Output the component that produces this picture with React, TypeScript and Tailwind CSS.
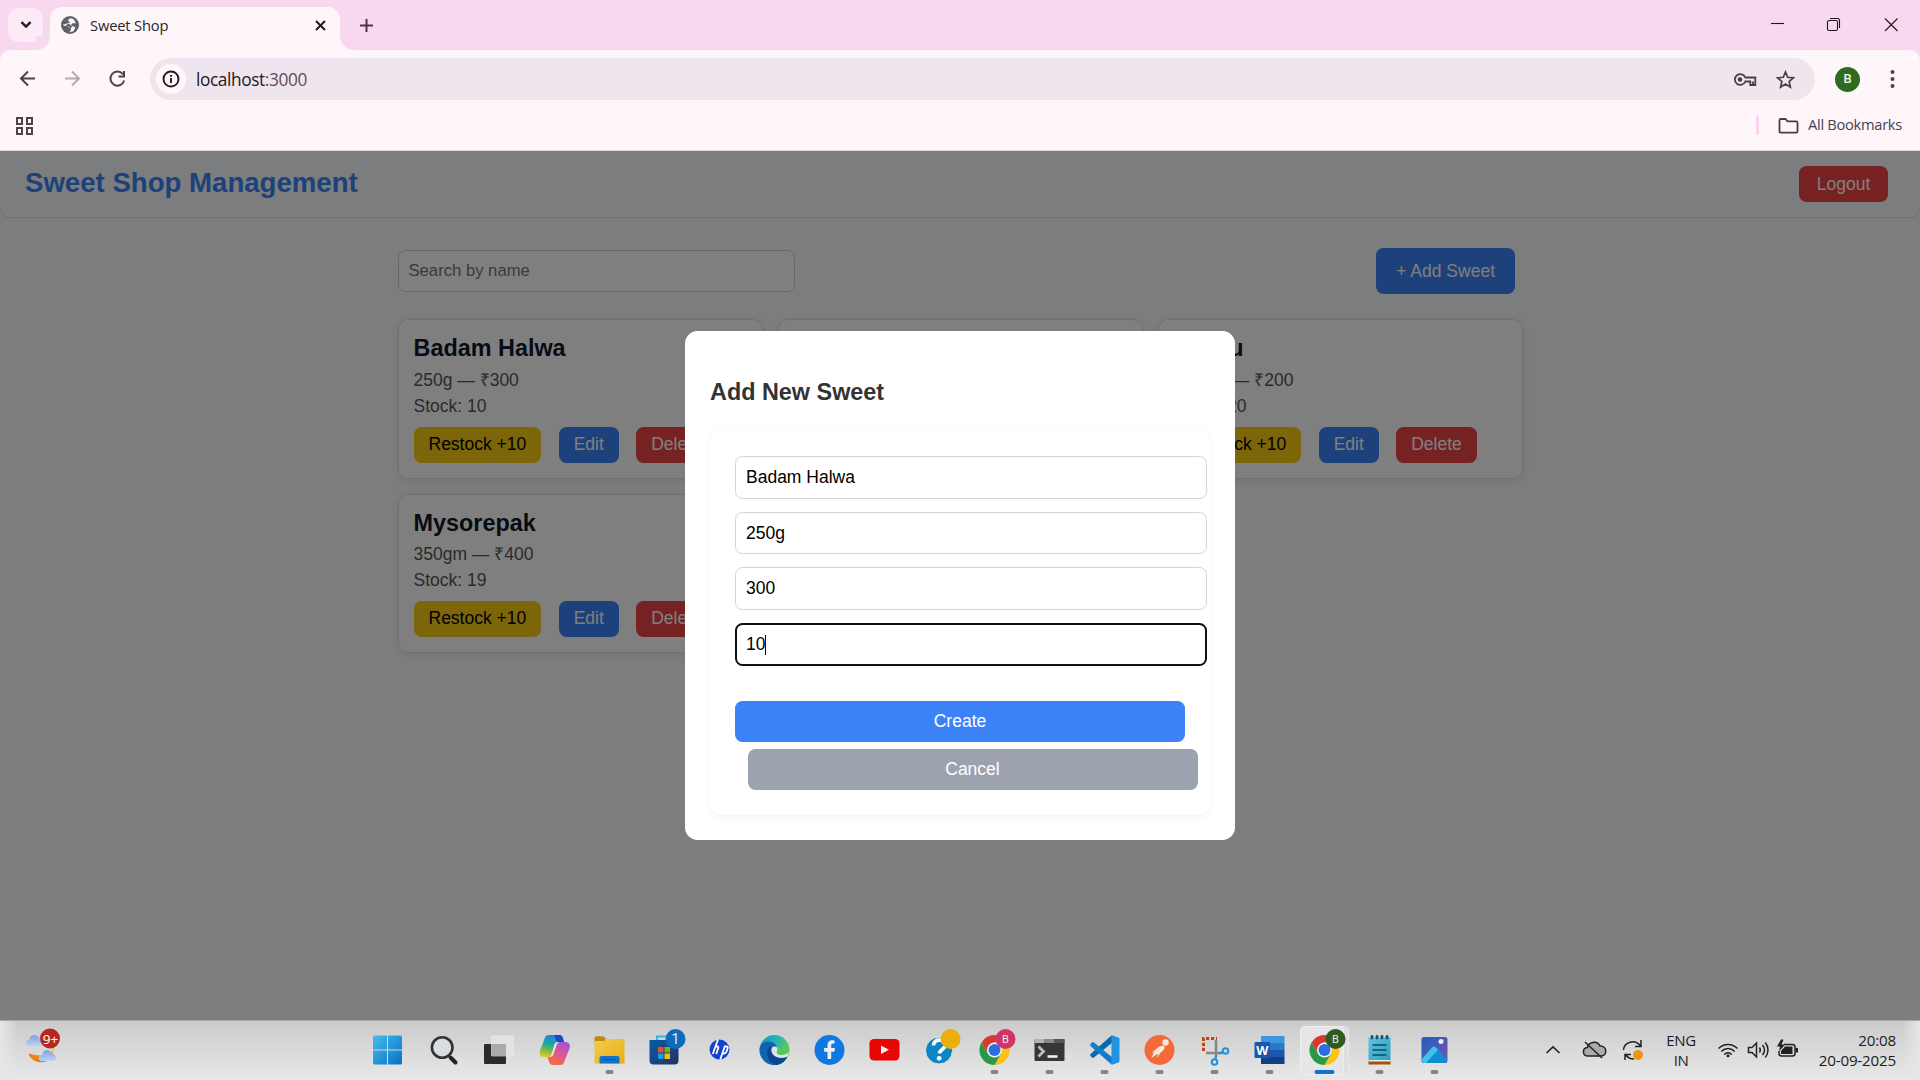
import React from "react";

const ui = "font-['Open_Sans','Noto_Sans',sans-serif]";

function TabStrip() {
  return (
    <div className="flex h-[50px] shrink-0 bg-[#f7d8ee]">
      <div className="mt-2 ml-2 flex h-[34px] w-[35px] items-center justify-center rounded-[11px] bg-[#fdeaf7]">
        <svg width="12" height="8" viewBox="0 0 12 8" fill="none" stroke="#1f1a1e" strokeWidth="2.4">
          <path d="M1.5 1.2 6 5.6l4.5-4.4" />
        </svg>
      </div>
      <div className="relative mt-[7px] ml-[7px] flex h-[43px] w-[290px] items-center rounded-t-[12px] bg-[#fff6fa] pb-[7px]">
        <span className="absolute bottom-0 -left-[14px] size-[14px] bg-[radial-gradient(circle_at_0_0,#f7d8ee_13.5px,#fff6fa_14.5px)]" />
        <span className="absolute -right-[14px] bottom-0 size-[14px] bg-[radial-gradient(circle_at_100%_0,#f7d8ee_13.5px,#fff6fa_14.5px)]" />
        <svg className="ml-[11px]" width="18" height="18" viewBox="0 0 18 18">
          <circle cx="9" cy="9" r="9" fill="#5f6368" />
          <path d="M11 2.600C8.600 2.300 7.300 3 7.200 4.300c-.1 1.200 1.500.9 1.500 2 0 1.300-1.400.9-2.700 1.300-1.200.400-2 1.100-3.900.700.300 1.300 1.300 1.700 2.600 1.600 1.500-.1 3.200.1 3.600 1.400.300 1.200 1.700.8 1.700 2 0 1-.7 1.300-1.600 2.500 1.500.200 3-.2 4.200-.9.300-1.700 1.500-1.700 1.500-3.200-.1-1.300-1.300-1.300-2.500-1.500-1.400-.3-1.600-1.700-.8-2.500.9-.8 2.500-.4 3.800-.3C14.400 5.400 13 3.500 11 2.600z" fill="#fff6fa" />
          <path d="M7.500 7.400c1 1.500 2.800 1 3.200 2.600.300 1.400-.4 2.400-1.500 2.500-.5-2-1.700-3-4.400-2.800.5-1.200 1.700-1.600 2.700-2.300z" fill="#5f6368" />
        </svg>
        <span className={"ml-[11px] w-[90px] text-[14.7px] tracking-[-0.15px] whitespace-nowrap text-[#2a2328] " + ui}>Sweet Shop</span>
        <svg className="ml-auto mr-[14.500px]" width="11" height="11" viewBox="0 0 11 11" stroke="#1f1a1e" strokeWidth="2">
          <path d="m1 1 9 9M10 1l-9 9" />
        </svg>
      </div>
      <svg className="mt-[18.500px] ml-[19.500px]" width="13" height="13" viewBox="0 0 13 13" stroke="#4b3547" strokeWidth="2">
        <path d="M6.500 0v13M0 6.500h13" />
      </svg>
      <svg className="ml-auto" width="160" height="50" viewBox="1760 0 160 50" fill="none" stroke="#1d171b" strokeWidth="1.100">
        <path d="M1771 23.500h13" />
        <rect x="1827.500" y="20.500" width="10" height="10" rx="1.500" />
        <path d="M1830 18.500h7.500a2 2 0 0 1 2 2V28" />
        <path d="m1885 18.500 12.500 12.500M1897.500 18.500 1885 31" />
      </svg>
    </div>
  );
}

function Toolbar() {
  return (
    <div className="shrink-0 bg-[#f7d8ee]">
      <div className="h-[101px] rounded-t-[10px] border-b border-[#ead9e3] bg-[#fff6fa]">
        <div className="flex h-[58px] items-center">
          <svg width="150" height="58" viewBox="0 50 150 58" fill="none" stroke="#543d50" strokeWidth="2">
            <path d="M35 78.500H21.500M28 71.500l-7 7 7 7" />
            <path d="M65 78.500h13.500M72 71.500l7 7-7 7" stroke="#b3a8af" />
            <path d="M124.200 80.500a7 7 0 1 1-1.300-6.300" />
            <path d="M124 71v5.500h-5.500" />
          </svg>
          <div className="flex h-[42px] w-[1665px] items-center rounded-full bg-[#efe5ee] pl-[6px]">
            <div className="flex size-[30px] items-center justify-center rounded-full bg-[#fff6fa]">
              <svg width="18" height="18" viewBox="0 0 18 18" fill="none" stroke="#1f1a1e" strokeWidth="1.900">
                <circle cx="9" cy="9" r="7.500" />
                <path d="M9 8v5M9 5v1.800" />
              </svg>
            </div>
            <span className={"ml-[10px] pt-px text-[17.3px] tracking-[-0.400px] text-[#1f1a1e] " + ui}>
              localhost<span className="text-[#5e4d5a]">:3000</span>
            </span>
            <svg className="ml-auto mr-[20px]" width="62" height="22" viewBox="1733 68 62 22" fill="none" stroke="#473f45" strokeWidth="1.800">
              <path d="M1745.300 77.500a5.400 5.400 0 1 0 0 4h5v3.500h5v-7.500z" />
              <circle cx="1740" cy="79.500" r="2.300" fill="#473f45" stroke="none" />
              <path d="M1753 85v-3.500" />
              <path d="m1785.500 72 2.200 5.300 5.700.500-4.300 3.700 1.300 5.600-4.900-3-4.900 3 1.300-5.600-4.300-3.700 5.700-.500z" strokeWidth="1.700" />
            </svg>
          </div>
          <div className="ml-[20px] flex size-[25px] items-center justify-center rounded-full bg-[#2f6b1d] font-['Roboto',sans-serif] text-[13px] font-medium text-[#edf5ea]">B</div>
          <svg className="ml-[30px]" width="5" height="20" viewBox="0 0 5 20" fill="#543d50">
            <circle cx="2.500" cy="3" r="2" />
            <circle cx="2.500" cy="10" r="2" />
            <circle cx="2.500" cy="17" r="2" />
          </svg>
        </div>
        <div className="flex h-[42px] items-center pb-[9px]">
          <div className="ml-[15.500px] mt-[3px] grid grid-cols-2 gap-[2.500px]">
            <span className="size-[7.500px] border-2 border-[#4c4449]" />
            <span className="size-[7.500px] border-2 border-[#4c4449]" />
            <span className="size-[7.500px] border-2 border-[#4c4449]" />
            <span className="size-[7.500px] border-2 border-[#4c4449]" />
          </div>
          <span className="mt-[1px] ml-auto h-[20px] w-[3px] rounded-full bg-[#fbd3f0]" />
          <svg className="mt-[2px] ml-[19px]" width="21" height="16" viewBox="0 0 21 16" fill="none" stroke="#473f45" strokeWidth="1.800">
            <path d="M1.500 2.200c0-.7.400-1.200 1.200-1.200h4.800l2 2.300h8.800c.8 0 1.200.500 1.200 1.200v9c0 .700-.4 1.200-1.200 1.200H2.700c-.8 0-1.200-.5-1.200-1.200z" />
          </svg>
          <span className={"mr-[18px] ml-[9.500px] text-[14.700px] tracking-[-0.300px] text-[#473f50] " + ui}>All Bookmarks</span>
        </div>
      </div>
    </div>
  );
}

type Sweet = { name: string; detail: string; stock: string };

const sweets: (Sweet | null)[] = [
  { name: "Badam Halwa", detail: "250g — ₹300", stock: "Stock: 10" },
  null,
  { name: "Laddu", detail: "250gm — ₹200", stock: "Stock: 20" },
  { name: "Mysorepak", detail: "350gm — ₹400", stock: "Stock: 19" },
];

function SweetCard({ sweet }: { sweet: Sweet | null }) {
  return (
    <div className="h-[159.4px] rounded-[10px] border border-[#e0e0e3] bg-white p-[15px] shadow-[0_2px_8px_rgba(0,0,0,0.08)]">
      {sweet && (
        <>
          <h3 className="mb-[4.500px] text-[23.4px] leading-[27px] font-bold text-[#0f172a]">{sweet.name}</h3>
          <p className="text-[17.5px] leading-[26px] text-[#555]">{sweet.detail}</p>
          <p className="text-[17.5px] leading-[26px] text-[#555]">{sweet.stock}</p>
          <div className="mt-[8px] flex gap-[17.4px] text-[17.5px]">
            <button className="h-[36px] rounded-[7.5px] bg-[#facc15] px-[15px] pb-[1.600px] leading-[20px] whitespace-nowrap text-black">Restock +10</button>
            <button className="h-[36px] rounded-[7.5px] bg-[#3b82f6] px-[15px] pb-[1.600px] leading-[20px] text-white">Edit</button>
            <button className="h-[36px] rounded-[7.5px] bg-[#ef4444] px-[15px] pb-[1.600px] leading-[20px] text-white">Delete</button>
          </div>
        </>
      )}
    </div>
  );
}

const field = "flex h-[42.5px] w-[472px] items-center rounded-[7.5px] border border-[#d1d5db] bg-white px-[10px] text-[17.5px] text-black";

function Modal() {
  return (
    <div className="absolute inset-0 flex items-center justify-center bg-black/50">
      <div className="h-[509px] w-[550px] rounded-[12.5px] bg-white px-[25px] pt-[48px]">
        <h3 className="text-[23.4px] leading-[27px] font-bold text-[#333]">Add New Sweet</h3>
        <div className="mt-[25px] h-[384px] rounded-[12.5px] bg-white p-[25px] shadow-[0_2px_10px_rgba(0,0,0,0.05)]">
          <div className="flex flex-col gap-[13.200px]">
            <div className={field}>Badam Halwa</div>
            <div className={field}>250g</div>
            <div className={field + " pb-px"}>300</div>
            <div className="flex h-[43px] w-[472px] items-center rounded-[7.5px] border-2 border-[#101010] bg-white pr-[9px] pl-[9px] text-[17.5px] text-black">
              10<span className="h-[20px] w-px bg-black" />
            </div>
          </div>
          <button className="mt-[35px] flex h-[41px] w-[450px] items-center justify-center rounded-[7.5px] bg-[#3b82f6] pb-[1px] text-[17.5px] text-white">Create</button>
          <button className="mt-[7px] ml-[13px] flex h-[41px] w-[450px] items-center justify-center rounded-[7.5px] bg-[#9ca3af] pr-[1px] pb-[1px] text-[17.5px] text-white">Cancel</button>
        </div>
      </div>
    </div>
  );
}

function Page() {
  return (
    <div className="relative h-[869px] shrink-0 overflow-hidden bg-[#f8fafd] font-['Liberation_Sans',Arial,sans-serif]">
      <header className="flex h-[66px] items-center justify-between rounded-b-[10px] bg-[#f8fafd] pr-[32px] pl-[25px] shadow-[0_1px_1px_rgba(0,0,0,0.110)]">
        <h1 className="pb-[2px] text-[27.6px] font-bold text-[#3b82f6]">Sweet Shop Management</h1>
        <button className="h-[36px] w-[89px] rounded-[7.5px] bg-[#ef4444] text-[17.5px] text-white">Logout</button>
      </header>
      <main className="mx-auto mt-[31px] w-[1125px]">
        <div className="flex h-[46px] items-center justify-between pr-[7.5px]">
          <div className="flex h-[42px] w-[397px] items-center rounded-[7.5px] border border-[#d1d1d4] bg-white px-[10px] pb-[2px] text-[16.67px] text-[#757575]">Search by name</div>
          <button className="h-[46px] rounded-[7.5px] bg-[#3b82f6] px-[20px] text-[17.5px] text-white">+ Add Sweet</button>
        </div>
        <div className="mt-[25.400px] grid grid-cols-3 gap-[15px]">
          {sweets.map((s, i) => (
            <SweetCard key={i} sweet={s} />
          ))}
        </div>
      </main>
      <Modal />
    </div>
  );
}

function ChromeLogo() {
  return (
    <g transform="translate(27.5 29)">
      <path d="M-13-7.5A15 15 0 0 1 13-7.5L0-7.500-6.500 3.750Z" fill="#d93a2f" />
      <path d="M-13-7.5A15 15 0 0 1 13-7.5L0-7.500-6.500 3.750Z" fill="#fbc116" transform="rotate(120)" />
      <path d="M-13-7.5A15 15 0 0 1 13-7.5L0-7.500-6.500 3.750Z" fill="#2a9846" transform="rotate(240)" />
      <circle r="7.500" fill="#f4f6f8" />
      <circle r="6" fill="#2d6fe3" />
    </g>
  );
}

function Badge({ color, text, x = 38.500, y = 18, size = 11 }: { color: string; text: string; x?: number; y?: number; size?: number }) {
  return (
    <>
      <circle cx={x} cy={y} r="10" fill={color} />
      <text x={x} y={y + size * 0.36} fontSize={size} textAnchor="middle" fill="#f3e6ea" fontFamily="Roboto, sans-serif">{text}</text>
    </>
  );
}

const apps: { icon: React.ReactNode; mark?: "open" | "active" }[] = [
  {
    icon: (
      <g fill="url(#win)">
        <path d="M13 16a1.500 1.500 0 0 1 1.500-1.500H27v14H13zM28 14.500h12.500A1.500 1.500 0 0 1 42 16v12.500H28zM13 29.500h14v14H14.500A1.500 1.500 0 0 1 13 42zM28 29.500h14V42a1.500 1.500 0 0 1-1.500 1.500H28z" />
      </g>
    ),
  },
  {
    icon: (
      <g>
        <path d="m35.500 36.500 5 5" stroke="#222" strokeWidth="4" strokeLinecap="round" />
        <circle cx="27.200" cy="26.500" r="10.300" fill="#d9dde0" stroke="#333" strokeWidth="2.600" />
      </g>
    ),
  },
  {
    icon: (
      <g>
        <rect x="14" y="23" width="22" height="20" rx="1" fill="#2b2b2b" />
        <rect x="21.500" y="15" width="22" height="20" rx="1" fill="#e2e2e2" stroke="#f0f0f0" strokeWidth=".6" />
        <path d="M21.500 23H36v12H21.500z" fill="#aaa" />
      </g>
    ),
  },
  {
    icon: (
      <g>
        <path d="M18 16.500c.6-1.800 2-2.500 4-2.500h10c2.500 0 3.500 1.500 4.200 4l.8 3h-4c-2 0-3.200 1-3.800 3l-2.500 8.500c-.7 2.300-2 3.500-4.200 3.500H17c-4 0-5-3-4-6.500z" fill="url(#copA)" />
        <path d="M27 14h5c2.500 0 3.500 1.500 4.200 4l.8 3h-5.500c-1.500 0-2.300-1-2.700-2.500z" fill="#2046c4" />
        <path d="M37 41.500c-.6 1.800-2 2.500-4 2.500-3 0-3 0-6 0-3.500 0-4.500-1.500-5.200-4L20.500 36h2c2.200 0 3.500-1.200 4.200-3.500l2.500-8.500c.6-2 1.800-3 3.800-3h5.500c4 0 5 3 4 6.500z" fill="url(#copB)" />
        <path d="M29.800 23.500c.8-1.700 1.700-2.500 3.200-2.500h-2c-2 0-3.200 1-3.800 3l-2.500 8.500c-.7 2.300-1.200 3.500-3.200 3.500h1c2.200 0 3.500-1.200 4.200-3.500z" fill="#e4e4e6" />
      </g>
    ),
  },
  {
    mark: "open",
    icon: (
      <g>
        <path d="M12.500 17a1.800 1.800 0 0 1 1.800-1.800h7l3 2.800h-1v6H12.500z" fill="#c18a0a" />
        <path d="M12.500 20h9.500l2.500-2h18v24.500h-30z" fill="url(#fold)" />
        <path d="M17.500 42.500V37a2 2 0 0 1 2-2h16a2 2 0 0 1 2 2v5.500z" fill="#0f74c8" />
        <path d="M21.500 38.500h12" stroke="#0a4f94" strokeWidth="1.200" />
      </g>
    ),
  },
  {
    icon: (
      <g>
        <path d="M20 19v-3.500h10" fill="none" stroke="#34b4ea" strokeWidth="2" />
        <path d="M12.500 19h29v20.500a4 4 0 0 1-4 4h-21a4 4 0 0 1-4-4z" fill="url(#store)" />
        <path d="M21 26h5.500v5.500H21z" fill="#e8502a" />
        <path d="M27.500 26H33v5.500h-5.500z" fill="#78b111" />
        <path d="M21 32.500h5.500V38H21z" fill="#0ba4ee" />
        <path d="M27.500 32.500H33V38h-5.500z" fill="#fbba0c" />
        <Badge color="#0b6bbd" text="1" x={38.500} size={14} />
      </g>
    ),
  },
  {
    icon: (
      <g>
        <circle cx="27.500" cy="28.500" r="10" fill="#1443cf" />
        <g stroke="#fff" strokeWidth="1.800" fill="none">
          <path d="m26 18.500-5.200 14.500M23.600 25.500h1.400c1.300 0 1.600.7 1.200 1.900L24.200 33M28.200 38.500l4.600-13h1.700c1.200 0 1.500.700 1.100 1.900l-1.200 3.400c-.4 1.100-1.100 1.700-2.200 1.700h-1.600" />
        </g>
      </g>
    ),
  },
  {
    icon: (
      <g>
        <circle cx="27.500" cy="29" r="15" fill="url(#edgeA)" />
        <path d="M12.500 28c.5-5 5-8 9.500-7.500 4 .3 7 2.500 7.500 5.500-2.500-1.500-5.500.5-5 4 .7 5.500 8 8.500 15.500 6-2.500 5-7 8-12.500 8-9 0-15-7-15-16z" fill="#1263ae" />
        <path d="M21 27c-2.500 8 1.500 15.500 8 17 5-.4 8.800-3.400 11-8-7.500 2.500-14.800-.5-15.500-6-.3-1.800 0-3.200 1-4-2-.6-3.700-.3-4.500 1z" fill="#0c4591" />
        <path d="M25.500 26c2-1.500 5 0 5.300 2.500.2 1.600-1.300 2.500-.8 3.800.8 2 8.500 2.700 12-1.300l-1.500 4.500c-7 3-15.300.5-16-5.500-.2-1.800.1-3.200 1-4z" fill="#dfe4e8" />
        <path d="M30 32c1 2.500 9 2.500 12-2l.5-1.500L31 27c0 2-2 3-1 5z" fill="#56c959" />
      </g>
    ),
  },
  {
    icon: (
      <g>
        <circle cx="27.500" cy="29" r="15" fill="#0f78e3" />
        <path d="M25.500 38v-7.300h-3.400v-3.800h3.400v-2.700c0-3.400 1.900-5 4.700-5 1 0 2 .1 2.400.2v3.200h-1.500c-1.300 0-1.900.7-1.900 1.800v2.500H33l-.6 3.800h-3.200V38z" fill="#e9eef4" />
      </g>
    ),
  },
  {
    icon: (
      <g>
        <rect x="12.500" y="18" width="30" height="21.500" rx="4.500" fill="#ea0505" />
        <path d="M24 24.500v8.500l8-4.250z" fill="#f3eeee" />
      </g>
    ),
  },
  {
    icon: (
      <g>
        <circle cx="27" cy="29.500" r="13.500" fill="#0b86c0" stroke="#d9edf5" />
        <path d="M21.500 24.500c0-4 3-5.500 5.800-5.500 3.500 0 6 2 6 5 0 4.200-5.800 4.200-5.800 8.500" fill="none" stroke="#f3f8fa" strokeWidth="3.800" />
        <circle cx="27.200" cy="37.300" r="2.400" fill="#f3f8fa" />
        <circle cx="38.500" cy="18" r="10" fill="#e9af0c" />
      </g>
    ),
  },
  { mark: "open", icon: (<g><ChromeLogo /><Badge color="#cf3569" text="B" /></g>) },
  {
    mark: "open",
    icon: (
      <g>
        <rect x="12.500" y="18" width="30" height="22" rx="1" fill="#363636" />
        <path d="M12.500 18h10v4h-10z" fill="#b5b5b5" />
        <path d="M22.500 18h10v4h-10z" fill="#8a8a8a" />
        <path d="M32.500 18h10v4h-10z" fill="#555" />
        <path d="m16.500 25.500 5 5-5 5" fill="none" stroke="#bdbdbd" strokeWidth="2.800" />
        <path d="M25.500 35.500h10" stroke="#eee" strokeWidth="2.600" />
      </g>
    ),
  },
  {
    mark: "open",
    icon: (
      <g>
        <path d="m34.500 14.500-21 18.500a1.500 1.500 0 0 0 0 2l1.500 1.500a1.500 1.500 0 0 0 2 0L36 21z" fill="#0a69ab" />
        <path d="m34.500 43.500-21-18.500a1.500 1.500 0 0 1 0-2l1.500-1.500a1.500 1.500 0 0 1 2 0L36 37z" fill="#0f7dc8" />
        <path d="m34.500 14 6.800 2.500c.8.300 1.200.8 1.200 1.600v21.800c0 .8-.4 1.300-1.200 1.600L34.500 44z" fill="#2293e2" />
      </g>
    ),
  },
  {
    mark: "open",
    icon: (
      <g>
        <circle cx="27.500" cy="29" r="15" fill="#f26a36" />
        <circle cx="33.500" cy="21.500" r="3.200" fill="#f7e7dd" />
        <path d="M31 24.500c-5 1-8.500 4-9.500 8l-2.300 4.600 5-3.400c4-1 7-3.500 8.800-7.200z" fill="#f7e7dd" />
        <path d="m24 29-3.500 2.500M28 31.500 25.500 36" stroke="#f7e7dd" strokeWidth="1" />
      </g>
    ),
  },
  {
    mark: "open",
    icon: (
      <g>
        <path d="M16.500 30V17.500H30" fill="none" stroke="#cb3f12" strokeWidth="3" strokeDasharray="3.200 1.800" />
        <path d="M29 19v17M19 32h16" stroke="#85888b" strokeWidth="2.600" />
        <circle cx="38.500" cy="30" r="2.800" fill="none" stroke="#1d93dc" strokeWidth="2" />
        <circle cx="27.500" cy="41" r="2.800" fill="none" stroke="#1d93dc" strokeWidth="2" />
        <path d="m32 32.500 4-1.500M28.500 38.500l.5-4" stroke="#1d93dc" strokeWidth="2" />
      </g>
    ),
  },
  {
    mark: "open",
    icon: (
      <g>
        <path d="M19 15h23.500v7H19z" fill="#3f96dc" />
        <path d="M19 22h23.500v7H19z" fill="#2a78cc" />
        <path d="M19 29h23.500v7H19z" fill="#1b57ae" />
        <path d="M19 36h23.500v7H19z" fill="#123d87" />
        <rect x="12.500" y="21" width="15.500" height="16" rx="1" fill="#1a55b2" />
        <text x="20.200" y="33.500" fontSize="12.500" fontWeight="700" textAnchor="middle" fill="#fff" fontFamily="Open Sans, sans-serif">W</text>
      </g>
    ),
  },
  {
    mark: "active",
    icon: (
      <g>
        <rect x="8" y="5.500" width="43.500" height="48" rx="4" fill="#dedede" stroke="#e8e8e8" />
        <rect x="3.500" y="5.500" width="43" height="48" rx="4" fill="#e6e6e6" stroke="#efefef" />
        <ChromeLogo />
        <Badge color="#2c5d1d" text="B" />
      </g>
    ),
  },
  {
    mark: "open",
    icon: (
      <g>
        <path d="M16.500 39h22v4.500h-22z" fill="#9c5310" />
        <path d="M16.500 38h22v2.500h-22z" fill="#f1e9dd" />
        <path d="M16.500 16.500h22V39h-22z" fill="url(#note)" />
        <path d="M20.500 24H34.500M20.500 29H34.500M20.500 34H34.500" stroke="#0d6786" strokeWidth="1.800" />
        <path d="M20 15.500v1.500M25 15.500v1.500M30 15.500v1.500M35 15.500v1.500" stroke="#0f5a76" strokeWidth="2.800" strokeLinecap="round" />
      </g>
    ),
  },
  {
    mark: "open",
    icon: (
      <g>
        <rect x="14.500" y="16" width="26" height="26" rx="2.500" fill="url(#photo)" />
        <path d="m15 38 10-11.500c1-1.200 3-1.200 4 0L40 38v2a2 2 0 0 1-2 2H17a2 2 0 0 1-2-2z" fill="#148bd2" />
        <path d="m15 38 10-11.500c1-1.200 3-1.200 4 0l2 2.200L19 42h-2a2 2 0 0 1-2-2z" fill="#3cc4ea" />
        <circle cx="34" cy="20.500" r="2.500" fill="#e6f1fa" />
      </g>
    ),
  },
];

function Gradients() {
  return (
    <svg width="0" height="0" className="absolute">
      <defs>
        <linearGradient id="win" gradientUnits="userSpaceOnUse" x1="13" y1="14" x2="42" y2="44"><stop stopColor="#45bfeb" /><stop offset="1" stopColor="#0670c6" /></linearGradient>
        <linearGradient id="copA" x1="0.500" y1="0" x2="0.300" y2="1"><stop stopColor="#1a86dd" /><stop offset=".4" stopColor="#1ba6a5" /><stop offset=".7" stopColor="#6fbd45" /><stop offset="1" stopColor="#edc41d" /></linearGradient>
        <linearGradient id="copB" x1="0.800" y1="0" x2="0.300" y2="1"><stop stopColor="#9a52dd" /><stop offset=".5" stopColor="#e2568f" /><stop offset="1" stopColor="#f36f3d" /></linearGradient>
        <linearGradient id="fold" x1="0" y1="0" x2="1" y2="1"><stop stopColor="#f2cb52" /><stop offset="1" stopColor="#eaae12" /></linearGradient>
        <linearGradient id="store" x1="0" y1="0" x2="1" y2="1"><stop stopColor="#0a5ca8" /><stop offset="1" stopColor="#25305e" /></linearGradient>
        <linearGradient id="edgeA" x1="0" y1="0" x2="1" y2="0.500"><stop stopColor="#168fd0" /><stop offset=".5" stopColor="#25b2b4" /><stop offset="1" stopColor="#62d04c" /></linearGradient>
        <linearGradient id="note" x1="0" y1="0" x2="1" y2="1"><stop stopColor="#62c3da" /><stop offset="1" stopColor="#329ec0" /></linearGradient>
        <linearGradient id="photo" x1="0" y1="0" x2="1" y2="1"><stop stopColor="#1b62bd" /><stop offset="1" stopColor="#854dac" /></linearGradient>
        <linearGradient id="cloud" x1="0" y1="0" x2="0" y2="1"><stop stopColor="#7fa2dc" /><stop offset="1" stopColor="#bcd3f2" /></linearGradient>
        <linearGradient id="moon" x1="1" y1="0" x2="0" y2="1"><stop stopColor="#f2ba2b" /><stop offset="1" stopColor="#e56c15" /></linearGradient>
      </defs>
    </svg>
  );
}

function AppCell({ app }: { app: (typeof apps)[number] }) {
  return (
    <svg width="55" height="59" viewBox="0 0 55 59" className="shrink-0">
      {app.icon}
      {app.mark === "open" && <rect x="23.500" y="49" width="8" height="4" rx="2" fill="#858585" />}
      {app.mark === "active" && <rect x="17.500" y="49" width="20" height="4" rx="2" fill="#0b74cf" />}
    </svg>
  );
}

function Taskbar() {
  return (
    <div className="relative flex h-[60px] shrink-0 border-t border-[#a8a8a8] bg-linear-to-b from-[#cbcbcb] to-[#e8e8e8]">
      <Gradients />
      <span className="absolute inset-y-0 left-0 w-[18px] bg-linear-to-r from-[#e6e6e6] to-transparent" />
      <span className="absolute inset-y-0 right-0 w-[18px] bg-linear-to-l from-[#e6e6e6] to-transparent" />
      <svg width="360" height="59" viewBox="0 1021 360 59" className="shrink-0">
        <path d="M53 1046c1 8-8 12-24.500 7.500 1.500 6 9 10 15.500 8.500 7-1.500 11-9 9-16z" fill="url(#moon)" />
        <path d="M29 1046c-4 0-4-6 0-6 .500-3.500 4-6 7.500-4.500 2 .500 3 2 3.500 4l5 .500v6z" fill="url(#cloud)" />
        <path d="M42 1061c-4.500 0-4.500-6 0-6 .500-4 4-6 7-4.500 1.600.700 2.300 2 2.700 3.500 5-.5 5.800 7 .8 7z" fill="url(#cloud)" />
        <circle cx="50" cy="1038.500" r="10" fill="#b6271c" />
        <text x="50.500" y="1043.500" fontSize="13.500" textAnchor="middle" fill="#fff" fontFamily="Open Sans, sans-serif">9+</text>
      </svg>
      <div className="flex">
        {apps.slice(0, 3).map((a, i) => (
          <AppCell key={i} app={a} />
        ))}
      </div>
      <div className="ml-[1.500px] flex">
        {apps.slice(3).map((a, i) => (
          <AppCell key={i} app={a} />
        ))}
      </div>
      <svg className="ml-auto shrink-0" width="120" height="59" viewBox="1535 1021 120 59" fill="none" stroke="#222" strokeWidth="1.700">
        <path d="m1546.500 1053 6.500-6 6.500 6" />
        <path d="M1588 1056c-6 0-6-8-.500-8.500.500-5.500 9.500-7.500 12.500-1.500 7-.500 8 10 1 10z" fill="#aaa" strokeWidth="1.500" />
        <path d="m1585 1042 17 16" strokeWidth="1.600" />
        <path d="M1623.500 1050c.5-8 11.500-11.500 17-4M1641 1040v6.500h-6M1634 1059c-3.500 0-6.500-1.500-8-4M1625 1060v-5.500h6" strokeWidth="1.500" />
        <circle cx="1638" cy="1055" r="5" fill="#ee930c" stroke="none" />
      </svg>
      <div className={"flex w-[52px] flex-col items-center pt-[9px] text-center text-[15px] leading-[20px] tracking-[-0.400px] text-[#1c1c1c] " + ui}>
        <span>ENG</span>
        <span>IN</span>
      </div>
      <svg width="98" height="59" viewBox="1707 1021 98 59" fill="none" stroke="#222" strokeWidth="1.500">
        <path d="M1718.500 1048.500c5.500-5.500 13.500-5.500 19 0M1721.300 1051.500c4-4 9.400-4 13.400 0M1724.200 1054.500c2.300-2.300 5.300-2.300 7.600 0" />
        <circle cx="1728" cy="1055.700" r="1.500" fill="#222" stroke="none" />
        <path d="M1748.500 1047.500h3.500l4.500-4.500v14l-4.500-4.500h-3.500z" />
        <path d="M1759.500 1047.500c1 1.500 1 3.500 0 5M1762.500 1045c2.400 3 2.400 7 0 10M1765.300 1042.500c3.600 4.500 3.600 10.500 0 15" />
        <path d="M1784 1044.500h8.500a2.500 2.500 0 0 1 2.500 2.500v6.500a2.500 2.500 0 0 1-2.500 2.500h-11a2.500 2.500 0 0 1-2.500-2.500V1051" />
        <path d="M1785 1046.500h7.500v7.500h-11.500v-3zM1795.500 1048h2.500v4.500h-2.500zM1781 1039.500l-4 7h3l-1 5 6-7h-3.500l2-5z" fill="#222" stroke="none" />
      </svg>
      <div className={"mr-[24px] flex w-[91px] flex-col items-end pt-[9px] text-[15.200px] leading-[20px] tracking-[-0.200px] whitespace-nowrap text-[#1c1c1c] " + ui}>
        <span>20:08</span>
        <span>20-09-2025</span>
      </div>
    </div>
  );
}

export default function App() {
  return (
    <div className="flex h-[1080px] w-[1920px] flex-col overflow-hidden">
      <TabStrip />
      <Toolbar />
      <Page />
      <Taskbar />
    </div>
  );
}
